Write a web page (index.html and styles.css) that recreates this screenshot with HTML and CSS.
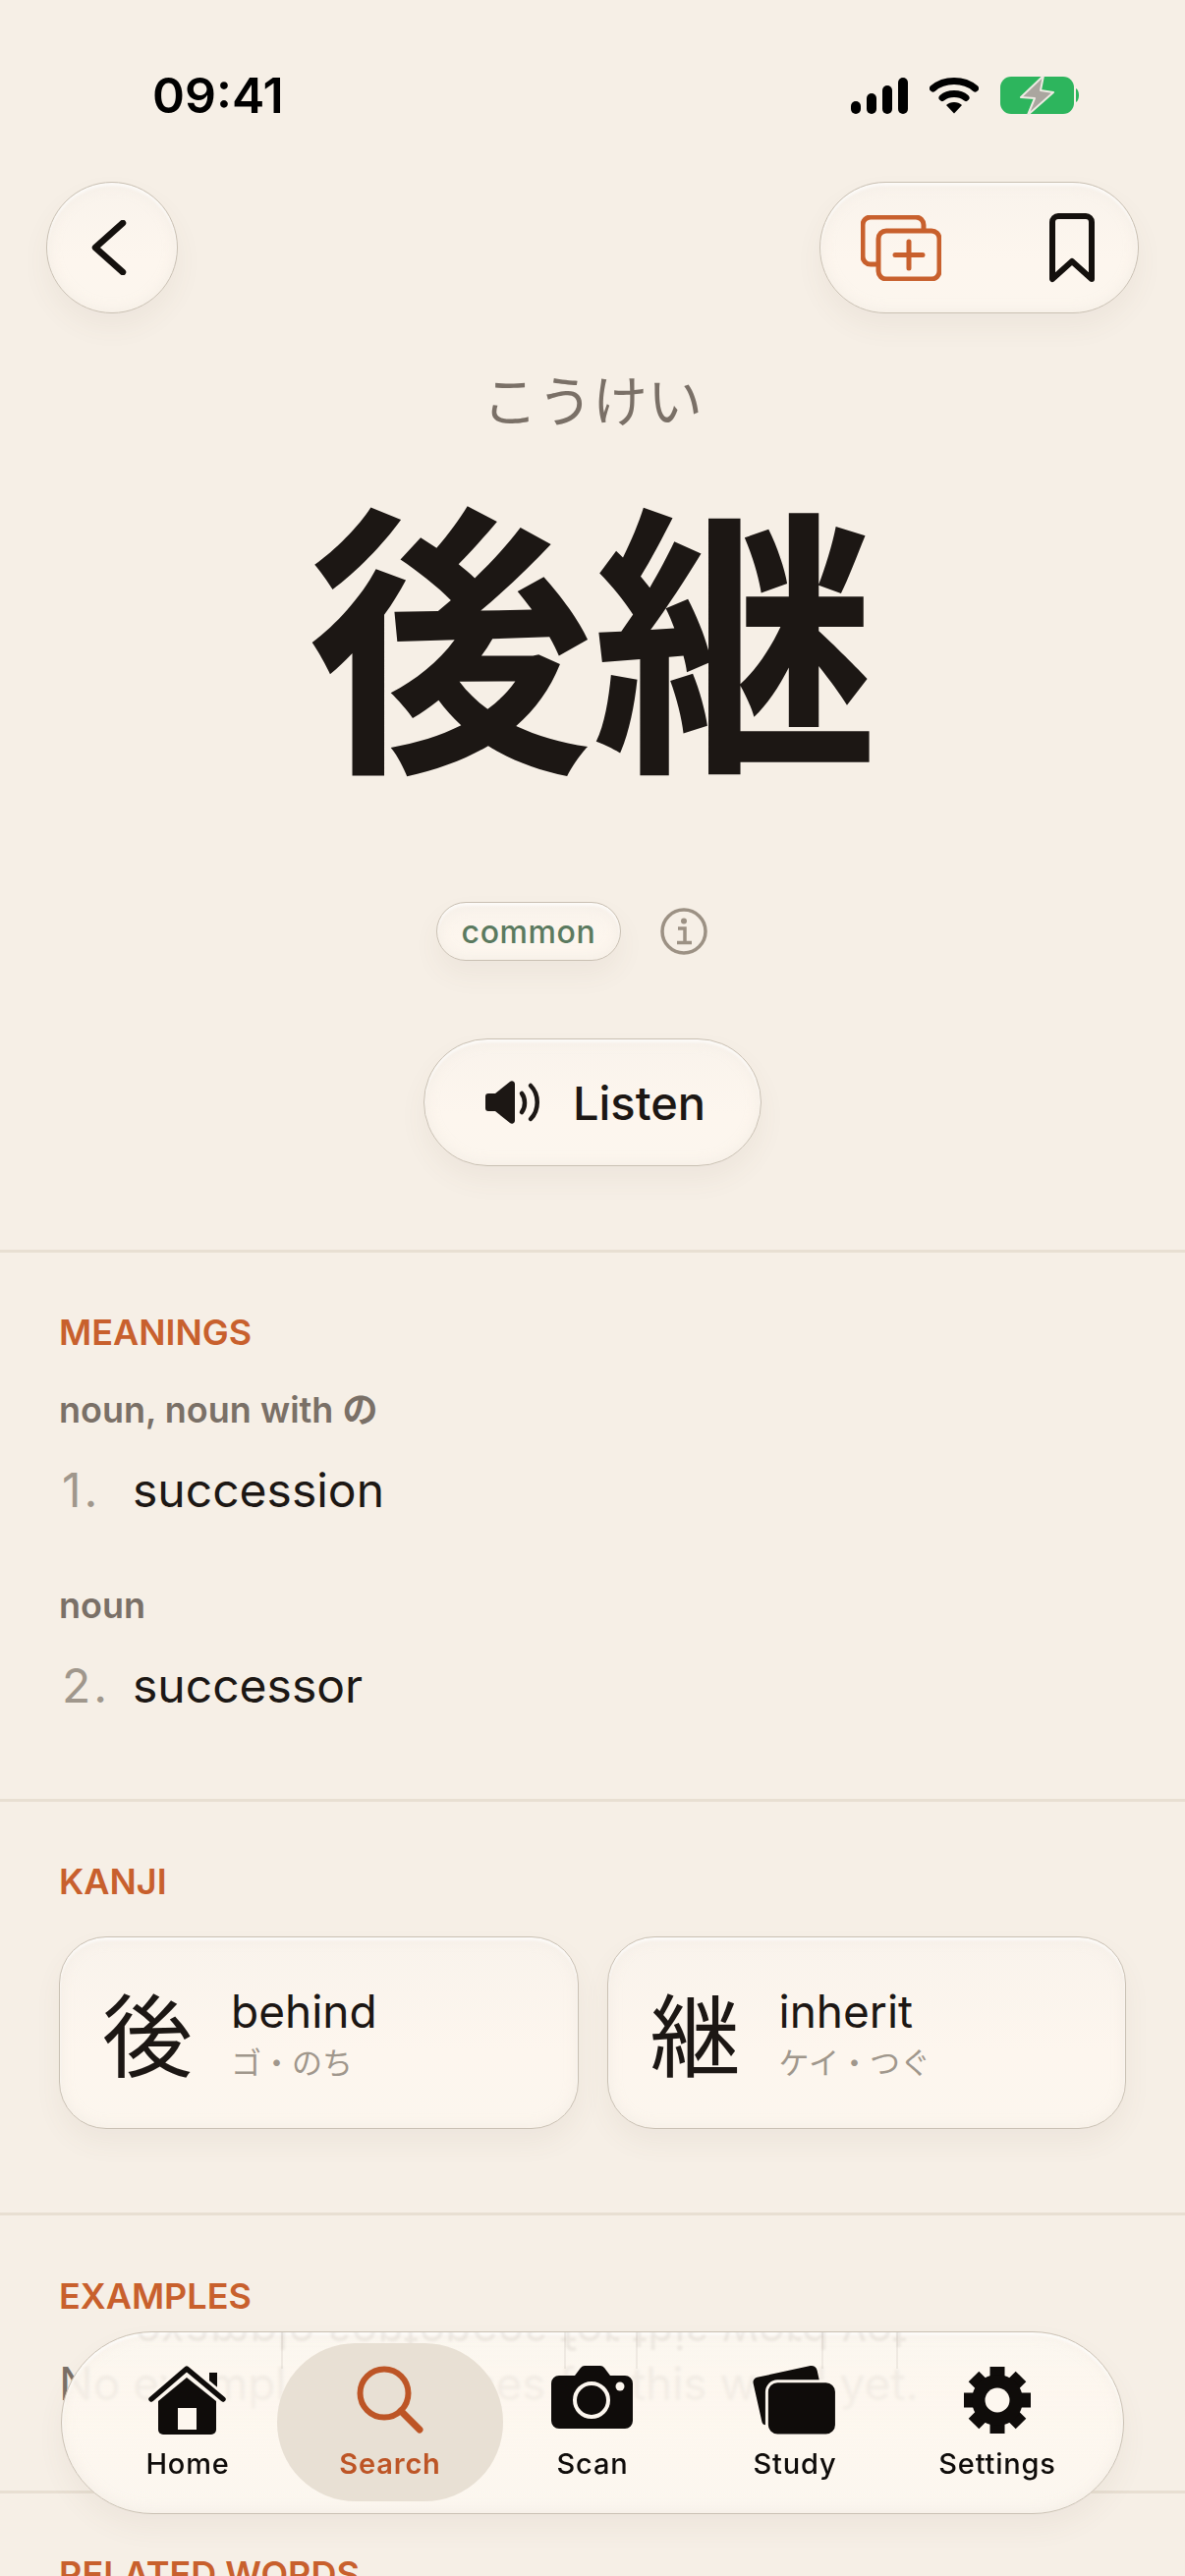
FILE: index.html
```html
<!DOCTYPE html>
<html lang="ja">

<head>
    <meta charset="UTF-8">
    <meta name="viewport" content="width=device-width, initial-scale=1.0">
    <title>後継</title>
    <link rel="stylesheet" href="styles.css">
</head>

<body>
    <div class="screen">
        <!-- status bar -->
        <div class="status">
            <span class="time">09:41</span>
            <div class="status-icons">
                <svg width="58" height="37" viewBox="0 0 58 37">
                    <rect x="0" y="24" width="10" height="13" rx="5" />
                    <rect x="16" y="16" width="10" height="21" rx="5" />
                    <rect x="32" y="8" width="10" height="29" rx="5" />
                    <rect x="48" y="0" width="10" height="37" rx="5" />
                </svg>
                <svg width="50" height="37" viewBox="0 0 50 37">
                    <path d="M3.500 11 C15 1 35 1 46.500 11" fill="none" stroke="#000" stroke-width="7" stroke-linecap="round" />
                    <path d="M13 20.500 C19 15 31 15 37 20.500" fill="none" stroke="#000" stroke-width="7" stroke-linecap="round" />
                    <path d="M17 28 C21 24 29 24 33 28 L25 36.500 Z" />
                </svg>
                <svg width="82" height="40" viewBox="0 0 82 40">
                    <rect x="0" y="1" width="75" height="38" rx="11" fill="#2db55d" />
                    <path d="M77 13 C81 15 81 25 77 27 Z" fill="#2db55d" />
                    <path d="M44 0 L21 22 L35 23 L28 40 L54 17 L41 15 Z" fill="#aaa69f" stroke="#eeeae3" stroke-width="2" stroke-linejoin="round" />
                </svg>
            </div>
        </div>

        <!-- back and actions -->
        <div class="topbar">
            <button class="glass round-btn" type="button">
                <svg width="36" height="56" viewBox="0 0 36 56">
                    <path d="M32 3 L4 28 L32 53" fill="none" stroke="#14100d" stroke-width="6.500" stroke-linecap="round" stroke-linejoin="round" />
                </svg>
            </button>
            <div class="glass action-pill">
                <svg width="82" height="67" viewBox="0 0 82 67">
                    <path d="M17 50 H10 a8 8 0 0 1 -8 -8 V10 a8 8 0 0 1 8 -8 H56 a8 8 0 0 1 8 8 V16" fill="none" stroke="#c8602d" stroke-width="5" />
                    <rect x="18" y="16" width="62" height="49" rx="8" fill="none" stroke="#c8602d" stroke-width="5" />
                    <path d="M49 27 V54 M35 40.500 H63" fill="none" stroke="#c8602d" stroke-width="5" stroke-linecap="round" />
                </svg>
                <svg width="46" height="71" viewBox="0 0 46 71">
                    <path d="M3 67 V9 a6 6 0 0 1 6 -6 H37 a6 6 0 0 1 6 6 V67 L23 49 Z" fill="none" stroke="#14100d" stroke-width="6" stroke-linejoin="round" />
                </svg>
            </div>
        </div>

        <!-- headword -->
        <header class="hero">
            <p class="reading">こうけい</p>
            <h1 class="word">後継</h1>
            <div class="tags">
                <span class="glass tag">common</span>
                <svg width="48" height="48" viewBox="0 0 48 48">
                    <circle cx="24" cy="24" r="22" fill="none" stroke="#9c9184" stroke-width="3.500" />
                    <circle cx="24" cy="13.500" r="3" fill="#9c9184" />
                    <path d="M18 21 H25 V35 M17 35.500 H32" fill="none" stroke="#9c9184" stroke-width="3.500" />
                </svg>
            </div>
            <button class="glass listen" type="button">
                <svg width="56" height="44" viewBox="0 0 56 44">
                    <path d="M3 13 H10 L25 1 a3 3 0 0 1 5 2 V41 a3 3 0 0 1 -5 2 L10 31 H3 a3 3 0 0 1 -3 -3 V16 a3 3 0 0 1 3 -3 Z" fill="#1c1714" />
                    <path d="M37 13 C41 18 41 27 37 32" fill="none" stroke="#1c1714" stroke-width="4.500" stroke-linecap="round" />
                    <path d="M46 5 C55 14 55 30 46 39" fill="none" stroke="#1c1714" stroke-width="4.500" stroke-linecap="round" />
                </svg>
                <span>Listen</span>
            </button>
        </header>

        <section class="block meanings">
            <h2 class="block-title">MEANINGS</h2>
            <p class="pos">noun, noun with の</p>
            <p class="sense"><span class="num">1.</span>succession</p>
            <p class="pos pos-next">noun</p>
            <p class="sense"><span class="num">2.</span>successor</p>
        </section>

        <section class="block kanji">
            <h2 class="block-title">KANJI</h2>
            <div class="kanji-grid">
                <div class="glass kanji-card">
                    <span class="kanji-char">後</span>
                    <div>
                        <div class="kanji-meaning">behind</div>
                        <div class="kanji-read">ゴ・のち</div>
                    </div>
                </div>
                <div class="glass kanji-card">
                    <span class="kanji-char">継</span>
                    <div>
                        <div class="kanji-meaning">inherit</div>
                        <div class="kanji-read">ケイ・つぐ</div>
                    </div>
                </div>
            </div>
        </section>

        <section class="block examples">
            <h2 class="block-title">EXAMPLES</h2>
            <p class="empty">No example sentences for this word yet.</p>
        </section>

        <section class="block related">
            <h2 class="block-title">RELATED WORDS</h2>
        </section>

        <!-- tab bar floats over the page -->
        <nav class="glass tabbar">
            <span class="mirror">No example sentences for this word yet.</span>
            <a class="tab" href="#">
                <svg width="82" height="72" viewBox="0 0 82 72">
                    <rect x="63" y="8" width="8" height="18" fill="#0f0c0a" />
                    <path d="M11 37 L40 13 L70 37 V66 a5 5 0 0 1 -5 5 H16 a5 5 0 0 1 -5 -5 Z" fill="#0f0c0a" />
                    <rect x="31" y="44" width="19" height="22" fill="#fdf7ef" />
                    <path d="M4 35 L40 4 L77 35" fill="none" stroke="#fdf7ef" stroke-width="11" />
                    <path d="M4 35 L40 4 L77 35" fill="none" stroke="#0f0c0a" stroke-width="5.500" stroke-linecap="round" stroke-linejoin="round" />
                </svg>
                <span>Home</span>
            </a>
            <a class="tab tab-active" href="#">
                <svg width="68" height="72" viewBox="0 0 68 72">
                    <circle cx="28" cy="29" r="24.500" fill="none" stroke="#bd5526" stroke-width="6" />
                    <path d="M45 47 L64 66" fill="none" stroke="#bd5526" stroke-width="7" stroke-linecap="round" />
                </svg>
                <span>Search</span>
            </a>
            <a class="tab" href="#">
                <svg width="84" height="72" viewBox="0 0 84 72">
                    <path d="M8 11 H24 L30 3 a6 6 0 0 1 4 -2 H50 a6 6 0 0 1 4 2 L60 11 H75 a8 8 0 0 1 8 8 V57 a8 8 0 0 1 -8 8 H8 a8 8 0 0 1 -8 -8 V19 a8 8 0 0 1 8 -8 Z" fill="#0f0c0a" />
                    <circle cx="41" cy="36" r="17" fill="none" stroke="#fdf7ef" stroke-width="4" />
                    <circle cx="70" cy="22" r="4.500" fill="#fdf7ef" />
                </svg>
                <span>Scan</span>
            </a>
            <a class="tab" href="#">
                <svg width="88" height="72" viewBox="0 0 88 73">
                    <path d="M5 13 L60 1 a6 6 0 0 1 7 5 L70 20 L14 62 a4 4 0 0 1 -4 -3 L1 19 a5 5 0 0 1 4 -6 Z" fill="#0f0c0a" />
                    <rect x="15" y="17" width="72" height="56" rx="11" fill="#0f0c0a" stroke="#fdf7ef" stroke-width="3" />
                </svg>
                <span>Study</span>
            </a>
            <a class="tab" href="#">
                <svg width="72" height="72" viewBox="0 0 72 72">
                    <g stroke="#0f0c0a" stroke-width="15">
                        <path d="M36 2 V70 M2 36 H70 M12 12 L60 60 M60 12 L12 60" />
                    </g>
                    <circle cx="36" cy="36" r="26" fill="#0f0c0a" />
                    <circle cx="36" cy="36" r="12.500" fill="#fdf7ef" />
                </svg>
                <span>Settings</span>
            </a>
        </nav>
    </div>
</body>

</html>
```

FILE: styles.css
```css
html,
body {
    margin: 0;
    padding: 0;
}

body {
    background: #f6efe6;
    color: #1c1714;
    font-family: Inter, "Noto Sans CJK JP", sans-serif;
}

.screen {
    position: relative;
    width: 1206px;
    height: 2622px;
    overflow: hidden;
}

h1,
h2,
p {
    margin: 0;
    font-weight: 400;
}

button {
    font-family: inherit;
    color: inherit;
    cursor: pointer;
}

/* the frosted look shared by pills and cards */
.glass {
    background: linear-gradient(180deg, #f9f3ec 0%, #fdf6ee 60%, #fcf6ee 100%);
    border: 1.500px solid #c9c0b3;
    box-shadow: 0 14px 28px rgba(110, 90, 60, 0.06), inset 0 3px 3px rgba(255, 255, 255, 0.7), inset 0 0 14px rgba(240, 232, 224, 0.7);
    box-sizing: border-box;
}

.status {
    display: flex;
    justify-content: space-between;
    align-items: center;
    height: 50px;
    padding: 72px 106px 0 155px;
}

.time {
    color: #000;
    font-size: 50px;
    font-weight: 600;
    line-height: 50px;
}

.status-icons {
    display: flex;
    align-items: center;
    gap: 22px;
}

.topbar {
    display: flex;
    justify-content: space-between;
    align-items: center;
    margin-top: 63px;
    padding: 0 47px;
}

.round-btn {
    display: flex;
    justify-content: center;
    align-items: center;
    width: 134px;
    height: 134px;
    padding: 0;
    border-radius: 50%;
}

.round-btn svg {
    margin-right: 6px;
}

.action-pill {
    display: flex;
    justify-content: space-between;
    align-items: center;
    width: 325px;
    height: 134px;
    padding: 0 44px 0 41px;
    border-radius: 67px;
}

.hero {
    display: flex;
    flex-direction: column;
    align-items: center;
    border-bottom: 3px solid #e8dfd2;
    padding-bottom: 85px;
}

.reading {
    margin-top: 55px;
    color: #7a7067;
    font-size: 56px;
    line-height: 70px;
}

.word {
    margin-top: 64px;
    font-size: 290px;
    font-weight: 700;
    line-height: 300px;
}

.tags {
    display: flex;
    align-items: center;
    gap: 40px;
    margin-top: 110px;
    margin-left: -42px;
}

.tag {
    display: flex;
    align-items: center;
    height: 60px;
    padding: 0 25px;
    border-radius: 30px;
    color: #5b7a5f;
    font-size: 32px;
    font-weight: 500;
    letter-spacing: 0.6px;
}

.listen {
    display: flex;
    align-items: center;
    gap: 33px;
    height: 130px;
    margin-top: 79px;
    padding: 0 56px 0 62px;
    border-radius: 65px;
    font-size: 47px;
    font-weight: 550;
}

.block {
    padding: 0 60px;
    border-bottom: 3px solid #e8dfd2;
}

.block-title {
    color: #c8602d;
    font-size: 36px;
    font-weight: 600;
    line-height: 44px;
}

.meanings {
    height: 559px;
    box-sizing: border-box;
    padding-top: 59px;
}

.pos {
    margin-top: 35px;
    color: #7a7067;
    font-size: 36px;
    font-weight: 600;
    line-height: 44px;
}

.pos-next {
    margin-top: 63px;
}

.sense {
    margin-top: 28px;
    font-size: 48px;
    line-height: 64px;
}

.num {
    display: inline-block;
    box-sizing: border-box;
    width: 75px;
    padding-left: 3px;
    color: #a0978c;
    letter-spacing: 3px;
}

.kanji {
    height: 421px;
    box-sizing: border-box;
    padding-top: 59px;
}

.kanji-grid {
    display: grid;
    grid-template-columns: 1fr 1fr;
    gap: 29px;
    margin-top: 34px;
}

.kanji-card {
    display: flex;
    align-items: center;
    gap: 39px;
    height: 196px;
    padding: 0 0 0 43px;
    border-radius: 48px;
}

.kanji-char {
    margin-top: 10px;
    font-size: 92px;
    line-height: 100px;
}

.kanji-meaning {
    font-size: 46px;
    line-height: 56px;
}

.kanji-read {
    margin-top: 5px;
    color: #a0978c;
    font-size: 31px;
    line-height: 40px;
}

.examples {
    height: 283px;
    box-sizing: border-box;
    padding-top: 60px;
}

.empty {
    margin-top: 37px;
    color: #7a7067;
    font-size: 46px;
    line-height: 60px;
}

.related {
    padding-top: 60px;
    border-bottom: none;
}

.tabbar {
    position: absolute;
    left: 62px;
    top: 2373px;
    display: grid;
    grid-template-columns: repeat(5, 206px);
    width: 1082px;
    height: 186px;
    padding: 11px 0 0 25px;
    overflow: hidden;
    border-radius: 93px;
    background: linear-gradient(180deg, rgba(252, 247, 240, 0.88) 0%, rgba(253, 247, 239, 0.94) 45%, #fdf7ef 70%, #fbf6ef 100%);
    backdrop-filter: blur(1.500px);
}

/* streaks where the glass edge stretches the text behind it */
.tabbar::before {
    content: "";
    position: absolute;
    left: 0;
    top: 0;
    width: 100%;
    height: 37px;
    background-image: linear-gradient(#7a7067, #7a7067), linear-gradient(#7a7067, #7a7067), linear-gradient(#7a7067, #7a7067), linear-gradient(#7a7067, #7a7067), linear-gradient(#7a7067, #7a7067);
    background-size: 2px 100%;
    background-position: 223px 0, 511px 0, 584px 0, 773px 0, 849px 0;
    background-repeat: no-repeat;
    opacity: 0.1;
}

.mirror {
    position: absolute;
    left: -1px;
    top: -29px;
    color: #7a7067;
    font-size: 46px;
    line-height: 60px;
    white-space: nowrap;
    opacity: 0.1;
    filter: blur(1px);
    transform: scaleY(-1);
}

.tab {
    position: relative;
    display: flex;
    flex-direction: column;
    align-items: center;
    justify-content: flex-start;
    height: 161px;
    padding-top: 22px;
    box-sizing: border-box;
    color: #0f0c0a;
    font-size: 29px;
    font-weight: 500;
    line-height: 36px;
    letter-spacing: 0.8px;
    text-decoration: none;
}

.tab svg {
    margin-bottom: 11px;
}

.tab-active {
    margin: 0 -12px;
    background: #e8e0d4;
    border-radius: 80px;
    color: #bd5526;
    font-weight: 600;
}
```
